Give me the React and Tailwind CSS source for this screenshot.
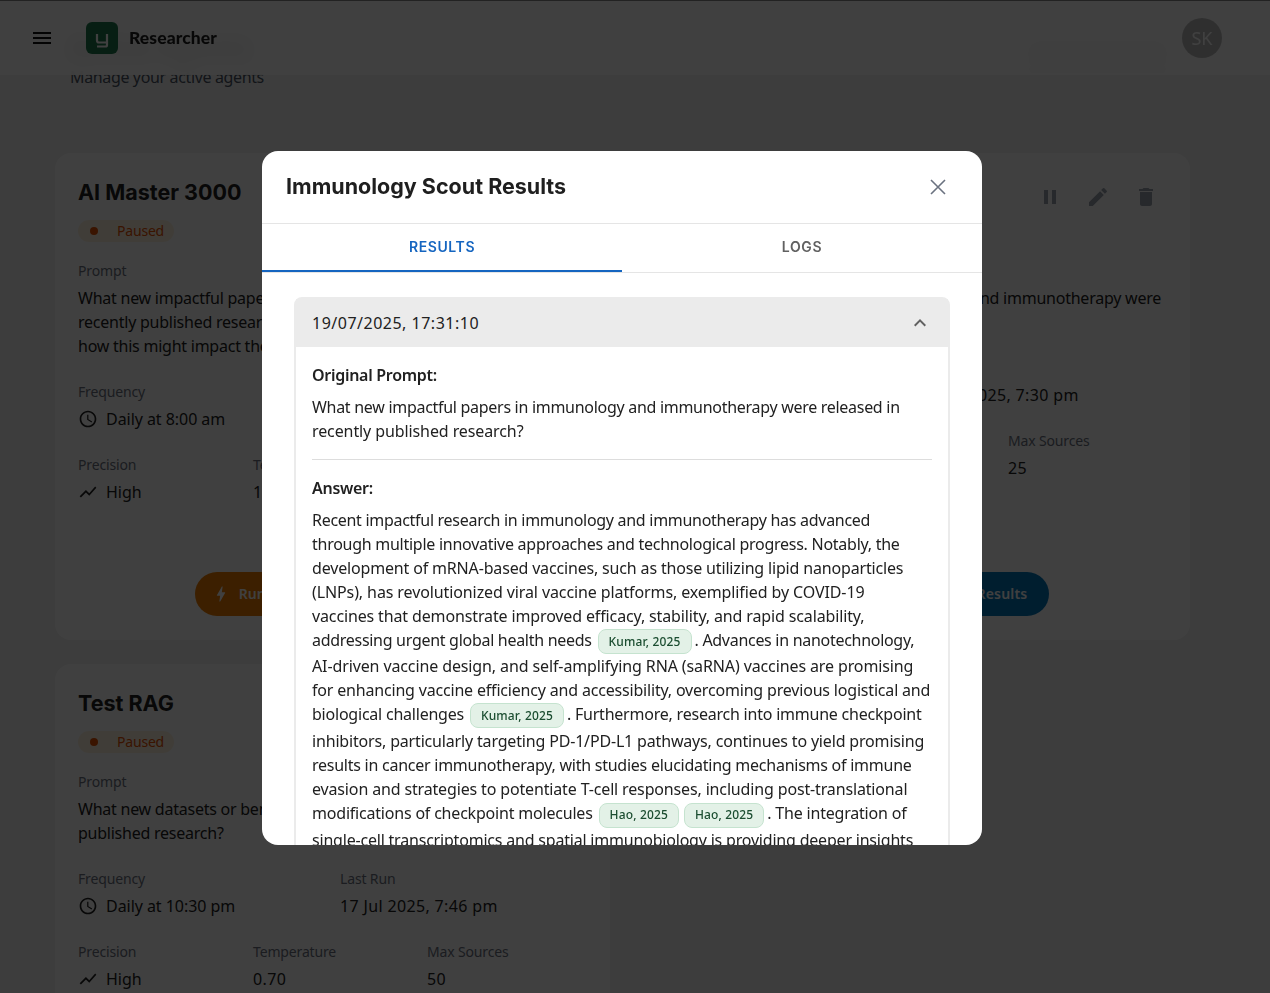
const Icon = ({ d, className }) => (
  <svg viewBox="0 0 24 24" className={className} fill="currentColor" aria-hidden="true">
    <path d={d} />
  </svg>
);

const P = {
  menu: "M3 18h18v-2H3v2zm0-5h18v-2H3v2zm0-7v2h18V6H3z",
  pause: "M6 19h4V5H6v14zm8-14v14h4V5h-4z",
  edit: "M3 17.25V21h3.75L17.81 9.94l-3.75-3.75L3 17.25zM20.71 7.04c.39-.39.39-1.02 0-1.41l-2.34-2.34a.9959.9959 0 0 0-1.41 0l-1.83 1.83 3.75 3.75 1.83-1.83z",
  del: "M6 19c0 1.1.9 2 2 2h8c1.1 0 2-.9 2-2V7H6v12zM19 4h-3.5l-1-1h-5l-1 1H5v2h14V4z",
  chart: "M3.5 18.49l6-6.01 4 4L22 6.92l-1.41-1.41-7.09 7.97-4-4L2 16.99z",
  clock: "M11.99 2C6.47 2 2 6.48 2 12s4.47 10 9.99 10C17.52 22 22 17.52 22 12S17.52 2 11.99 2zM12 20c-4.42 0-8-3.58-8-8s3.58-8 8-8 8 3.58 8 8-3.58 8-8 8zm.5-13H11v6l5.25 3.15.75-1.23-4.5-2.67z",
  bolt: "M11 21h-1l1-7H7.5c-.58 0-.57-.32-.38-.66.19-.34.05-.08.07-.12C8.48 10.94 10.42 7.54 13 3h1l-1 7h3.5c.49 0 .56.33.47.51l-.07.15C12.96 17.55 11 21 11 21z",
  up: "M12 8l-6 6 1.41 1.41L12 10.83l4.59 4.58L18 14z",
};

const Label = ({ children }) => <div className="text-sm leading-5 tracking-[-0.15px] text-[#6b7280]">{children}</div>;

const Value = ({ icon, children, digits }) => (
  <div className="mt-[5px] flex items-center gap-2 text-base leading-6 text-[#212121]">
    {icon && <Icon d={icon} className="h-5 w-5 shrink-0 text-[#212121]" />}
    <span className={digits ? "tracking-[0.35px]" : "tracking-[-0.05px]"}>{children}</span>
  </div>
);

const AgentCard = ({ title, prompt, freq, last, precision, temp, sources, right, buttons }) => (
  <section className="flex flex-col rounded-2xl bg-white px-[23px] pb-6 pt-6">
    <div className="flex h-[30px] items-start justify-between">
      <h2 className="font-['Inter',sans-serif] text-[21.5px] font-bold leading-[30px] text-[#212121]">{title}</h2>
      <div className={right ? "flex gap-6 pr-[9px] pt-2 text-[#9ca3af]" : "hidden"}>
        <Icon d={P.pause} className="h-6 w-6" />
        <Icon d={P.edit} className="h-6 w-6" />
        <Icon d={P.del} className="h-6 w-6" />
      </div>
    </div>
    <div className="mt-[13px] flex h-[22px] w-[96px] items-center rounded-full bg-[#fff3e0] pl-3 text-sm tracking-[-0.2px] text-[#e65100]">
      <span className="h-2 w-2 rounded-full bg-[#e65100]" />
      <span className="ml-[19px]">Paused</span>
    </div>
    <div className="mt-[19px]"><Label>Prompt</Label></div>
    <div className="mt-[5px] whitespace-nowrap text-base leading-6 tracking-[-0.24px] text-[#212121]">{prompt}</div>
    <div className="mt-6 flex">
      <div className={right ? "w-[268px]" : "w-[262px]"}>
        <Label>Frequency</Label>
        <Value icon={P.clock}>{freq}</Value>
      </div>
      <div>
        <Label>Last Run</Label>
        <Value digits>{last}</Value>
      </div>
    </div>
    <div className="mt-6 flex">
      <div className={right ? "w-[180px]" : "w-[175px]"}>
        <Label>Precision</Label>
        <Value icon={P.chart}>{precision}</Value>
      </div>
      <div className={right ? "w-[175px]" : "w-[174px]"}>
        <Label>Temperature</Label>
        <Value digits>{temp}</Value>
      </div>
      <div>
        <Label>Max Sources</Label>
        <Value digits>{sources}</Value>
      </div>
    </div>
    {buttons && (
      <div className="mt-auto flex justify-center gap-4 pl-px pt-[68px]">
        <div className="flex h-11 w-[127px] items-center justify-center gap-2 rounded-full bg-[#ed7d00] pr-[6px] text-sm font-semibold text-white">
          <Icon d={P.bolt} className="h-5 w-5" />
          Run Now
        </div>
        <div className="flex h-11 w-[133px] items-center justify-center rounded-full bg-[#0277bd] pl-[3px] text-sm font-semibold tracking-[0.2px] text-white">
          View Results
        </div>
      </div>
    )}
  </section>
);

const Cite = ({ children }) => (
  <span className="ml-[2px] mr-[3px] inline-flex h-[25px] items-center rounded-lg border border-[#c5e3cf] bg-[#e3f1e7] px-[10px] align-middle text-xs font-medium leading-none tracking-[0.15px] text-[#1b4d30]">
    {children}
  </span>
);

const L = ({ className, children }) => <div className={"whitespace-nowrap " + (className || "")}>{children}</div>;

export default function App() {
  return (
    <div className="relative h-[993px] overflow-hidden bg-[#f3f3f3] font-['Noto_Sans',sans-serif]">
      <header className="absolute inset-x-0 top-0 z-10 flex h-[75px] items-center border-t border-[#888888] bg-white/90 pl-[30px] pr-[48px] backdrop-blur-sm">
        <Icon d={P.menu} className="h-6 w-6 text-[#111111]" />
        <div className="ml-8 h-8 w-8 rounded-md bg-[#1f7a4d]">
          <svg viewBox="0 0 32 32" className="h-8 w-8" fill="none" stroke="#ffffff" strokeWidth="2.2" aria-hidden="true">
            <path d="M11 12v6.5a2 2 0 0 0 2 2h8M21 12v11a1.5 1.5 0 0 1-1.5 1.5H11" />
          </svg>
        </div>
        <span className="ml-[11px] font-['Lato',sans-serif] text-[17.5px] font-black tracking-[0.1px] text-[#1f1f1f]">Researcher</span>
        <div className="ml-auto flex h-10 w-10 items-center justify-center rounded-full bg-[#bdbdbd] text-lg text-white">SK</div>
      </header>

      <main className="px-[55px]">
        <div className="flex h-[153px] justify-between pl-[15px] pr-[43px] pt-[30px]">
          <div>
            <h1 className="text-[26px] font-bold leading-[35px] text-[#212121]">Active Agents</h1>
            <p className="text-base leading-6 tracking-[-0.36px] text-[#4b5563]">Manage your active agents</p>
          </div>
          <div className="mt-[6px] h-[37px] w-[149px] rounded-lg bg-[#dddddd]" />
        </div>
        <div className="grid grid-cols-[555px_560px] gap-x-5 gap-y-6">
          <AgentCard
            title="AI Master 3000"
            prompt={<>What new impactful papers in artificial intelligence were<br />recently published research? Provide a summary of<br />how this might impact the field.</>}
            freq="Daily at 8:00 am"
            last="18 Jul 2025, 8:00 am"
            precision="High"
            temp="1.00"
            sources="25"
            buttons
          />
          <AgentCard
            right
            title="Immunology Scout"
            prompt={<>What new impactful papers in immunology and immunotherapy were<br />released in recently published research?</>}
            freq="Daily at 7:30 pm"
            last="19 Jul 2025, 7:30 pm"
            precision="High"
            temp="0.70"
            sources="25"
            buttons
          />
          <AgentCard
            title="Test RAG"
            prompt={<>What new datasets or benchmarks were released in recently<br />published research?</>}
            freq="Daily at 10:30 pm"
            last="17 Jul 2025, 7:46 pm"
            precision="High"
            temp="0.70"
            sources="50"
          />
        </div>
      </main>

      <div className="fixed inset-0 z-20 flex items-center justify-center bg-black/75 pr-[26px] pt-[3px]">
        <div className="flex h-[694px] w-[720px] flex-col overflow-hidden rounded-2xl bg-white">
          <div className="flex h-[73px] shrink-0 items-center justify-between border-b border-[#e5e5e5] pb-[2px] pl-6 pr-8">
            <h2 className="font-['Inter',sans-serif] text-[21.5px] font-bold text-[#1f1f1f]">Immunology Scout Results</h2>
            <svg viewBox="0 0 24 24" className="mt-[2px] h-6 w-6" fill="none" stroke="#6b7280" strokeWidth="1.6" aria-hidden="true">
              <path d="M5 5l14 14M19 5L5 19" />
            </svg>
          </div>
          <div className="flex h-[49px] shrink-0 border-b border-[#e5e5e5] font-['Inter',sans-serif] text-sm font-semibold tracking-[0.6px]">
            <div className="flex w-1/2 items-center justify-center border-b-2 border-[#1565c0] text-[#1565c0]">RESULTS</div>
            <div className="flex w-1/2 items-center justify-center border-b-2 border-transparent text-[#616161]">LOGS</div>
          </div>
          <div className="min-h-0 flex-1 overflow-hidden px-8 pt-6">
            <div className="rounded-t-lg border-2 border-[#ebebeb]">
              <div className="flex h-12 items-center justify-between bg-[#ebebeb] pl-4 pr-4 text-base text-[#212121]">
                <span className="tracking-[0.5px]">19/07/2025, 17:31:10</span>
                <Icon d={P.up} className="h-6 w-6 text-[#616161]" />
              </div>
              <div className="px-4 pt-4 text-base leading-6 tracking-[-0.29px] text-[#212121]">
                <div className="font-semibold">Original Prompt:</div>
                <div className="mt-2">
                  <L>What new impactful papers in immunology and immunotherapy were released in</L>
                  <L className="tracking-[-0.1px]">recently published research?</L>
                </div>
                <hr className="mt-4 border-[#dddddd]" />
                <div className="mt-4 font-semibold">Answer:</div>
                <div className="mt-2">
                  <L>Recent impactful research in immunology and immunotherapy has advanced</L>
                  <L className="tracking-[-0.265px]">through multiple innovative approaches and technological progress. Notably, the</L>
                  <L className="tracking-[-0.165px]">development of mRNA-based vaccines, such as those utilizing lipid nanoparticles</L>
                  <L className="tracking-[-0.105px]">(LNPs), has revolutionized viral vaccine platforms, exemplified by COVID-19</L>
                  <L className="tracking-[-0.135px]">vaccines that demonstrate improved efficacy, stability, and rapid scalability,</L>
                  <L>addressing urgent global health needs <Cite>Kumar, 2025</Cite>. Advances in nanotechnology,</L>
                  <L className="tracking-[-0.115px]">AI-driven vaccine design, and self-amplifying RNA (saRNA) vaccines are promising</L>
                  <L className="tracking-[-0.185px]">for enhancing vaccine efficiency and accessibility, overcoming previous logistical and</L>
                  <L className="tracking-[-0.22px]">biological challenges <Cite>Kumar, 2025</Cite>. Furthermore, research into immune checkpoint</L>
                  <L className="mt-px tracking-[-0.17px]">inhibitors, particularly targeting PD-1/PD-L1 pathways, continues to yield promising</L>
                  <L className="tracking-[-0.25px]">results in cancer immunotherapy, with studies elucidating mechanisms of immune</L>
                  <L className="tracking-[-0.15px]">evasion and strategies to potentiate T-cell responses, including post-translational</L>
                  <L className="tracking-[-0.2px]">modifications of checkpoint molecules <Cite>Hao, 2025</Cite><Cite>Hao, 2025</Cite>. The integration of</L>
                  <L className="tracking-[-0.2px]">single-cell transcriptomics and spatial immunobiology is providing deeper insights</L>
                </div>
              </div>
            </div>
          </div>
        </div>
      </div>
    </div>
  );
}
